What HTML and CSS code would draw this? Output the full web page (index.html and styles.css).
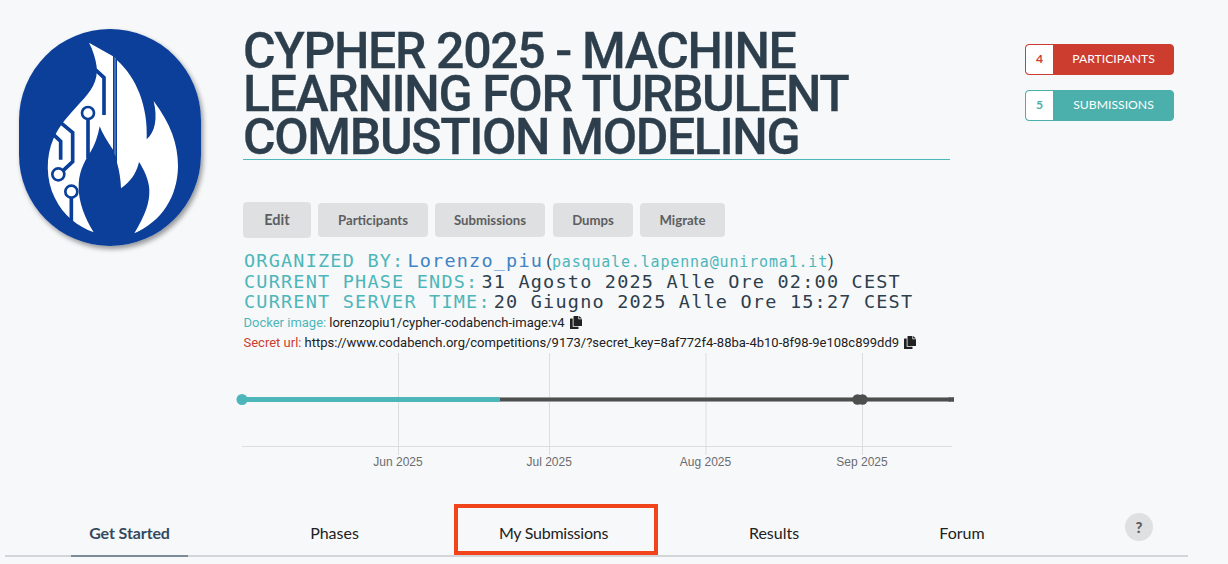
FILE: index.html
```html
<!DOCTYPE html>
<html lang="en">
<head>
<meta charset="utf-8">
<title>CYPHER 2025</title>
<link rel="stylesheet" href="styles.css">
</head>
<body>
<header class="hero">
  <svg class="logo" viewBox="57 57 546 651">
    <rect x="57" y="57" width="546" height="651" fill="#0b3f9a"/>
    <path fill="#fff" d="M267 98L339 139V419C322 394 307 370 299 349C293 380 285 405 270 428C249 461 235 490 236 535C237 580 254 622 281 667C235 650 190 618 165 565C137 509 137 440 160 387C179 344 206 317 239 280C275 241 294 214 290 170C287 146 279 121 267 98Z"/>
    <path fill="#fff" d="M351 151C409 202 445 290 440 388C466 366 473 323 461 273C512 342 534 401 534 469C533 560 485 635 403 670C437 611 449 579 448 539C447 510 431 477 417 456C410 489 391 516 363 535C362 507 358 482 351 458Z"/>
    <path fill="#7f9ccb" d="M343.500 141L346.500 145V440L343.500 430Z"/>
    <g fill="none" stroke="#0b3f9a" stroke-width="11">
      <path d="M286 179L312 203V315M182 338L218 368V455L190 481M160 373L182 394V449M264 327V445M214 563V640"/>
      <circle cx="264" cy="309" r="18" stroke-width="8" fill="#fff"/>
      <circle cx="175" cy="493" r="18" stroke-width="8" fill="#fff"/>
      <circle cx="214" cy="545" r="18" stroke-width="8" fill="#fff"/>
    </g>
  </svg>
  <main class="info">
    <h1 class="title">CYPHER 2025 - MACHINE<br>LEARNING FOR TURBULENT<br>COMBUSTION MODELING</h1>
    <div class="actions">
      <button class="btn btn-edit">Edit</button>
      <button class="btn btn-participants">Participants</button>
      <button class="btn btn-submissions">Submissions</button>
      <button class="btn btn-dumps">Dumps</button>
      <button class="btn btn-migrate">Migrate</button>
    </div>
    <div class="meta organizer"><span class="label">ORGANIZED BY:</span><a class="user">Lorenzo_piu</a><span class="paren open">(</span><a class="email">pasquale.lapenna@uniroma1.it</a><span class="paren">)</span></div>
    <div class="meta"><span class="label">CURRENT PHASE ENDS:</span><span class="value">31 Agosto 2025 Alle Ore 02:00 CEST</span></div>
    <div class="meta"><span class="label">CURRENT SERVER TIME:</span><span class="value">20 Giugno 2025 Alle Ore 15:27 CEST</span></div>
    <div class="detail docker"><span class="teal">Docker image:</span><span class="detail-text">lorenzopiu1/cypher-codabench-image:v4</span><svg class="copy" viewBox="0 0 12 13"><path d="M4 0H8.400V3.300H12V9.500Q12 10 11.500 10H4Q3.500 10 3.500 9.500V.5Q3.500 0 4 0ZM9.100 0L12 2.600H9.100Z"/><path d="M.5 2.500H2.700V10.800H8.500V12.500Q8.500 13 8 13H.5Q0 13 0 12.500V3Q0 2.500 .5 2.500Z"/></svg></div>
    <div class="detail secret"><span class="red">Secret url:</span><span class="detail-text">https://www.codabench.org/competitions/9173/?secret_key=8af772f4-88ba-4b10-8f98-9e108c899dd9</span><svg class="copy" viewBox="0 0 12 13"><path d="M4 0H8.400V3.300H12V9.500Q12 10 11.500 10H4Q3.500 10 3.500 9.500V.5Q3.500 0 4 0ZM9.100 0L12 2.600H9.100Z"/><path d="M.5 2.500H2.700V10.800H8.500V12.500Q8.500 13 8 13H.5Q0 13 0 12.500V3Q0 2.500 .5 2.500Z"/></svg></div>
    <svg class="timeline" viewBox="230 353 730 120">
      <g fill="#dcdddf">
        <rect x="398" y="353" width="1" height="102"/>
        <rect x="549" y="353" width="1" height="102"/>
        <rect x="705.500" y="353" width="1" height="102"/>
        <rect x="862" y="353" width="1" height="102"/>
        <rect x="242" y="446" width="710" height="1"/>
      </g>
      <rect x="500" y="397" width="454" height="5" fill="#9a9c9b"/>
      <rect x="500" y="398" width="454" height="3" fill="#4d4f4e"/>
      <rect x="242" y="397" width="258" height="5" fill="#4db6b9"/>
      <circle cx="242" cy="399.500" r="5.500" fill="#4db6b9"/>
      <g fill="#4d4f4e">
        <circle cx="857.500" cy="399.500" r="5.200"/>
        <circle cx="862.500" cy="399.500" r="5.200"/>
        <circle cx="950" cy="399.500" r="2.300"/>
        <rect x="952" y="397.500" width="2" height="4"/>
      </g>
      <g class="months">
        <text x="398" y="466">Jun 2025</text>
        <text x="549.200" y="466">Jul 2025</text>
        <text x="705.500" y="466">Aug 2025</text>
        <text x="862" y="466">Sep 2025</text>
      </g>
    </svg>
  </main>
  <aside class="stats">
    <div class="stat stat-red"><span class="count">4</span><span class="stat-name">PARTICIPANTS</span></div>
    <div class="stat stat-teal"><span class="count">5</span><span class="stat-name">SUBMISSIONS</span></div>
  </aside>
</header>
<nav class="tabs">
  <a class="tab tab-start"><span>Get Started</span></a>
  <a class="tab tab-phases">Phases</a>
  <a class="tab tab-mine">My Submissions</a>
  <a class="tab tab-results">Results</a>
  <a class="tab tab-forum">Forum</a>
  <span class="help">?</span>
</nav>
</body>
</html>
```
FILE: styles.css
```css
* { box-sizing: border-box; }
body {
  margin: 0;
  height: 564px;
  overflow: hidden;
  background: #f7f8fa;
  font-family: Lato, sans-serif;
  color: #212121;
}
.hero { display: flex; height: 504px; padding-left: 19px; }
.logo {
  flex: none;
  width: 182px;
  height: 217px;
  margin-top: 29px;
  border-radius: 91px;
  box-shadow: 2px 3px 5px rgba(0, 0, 0, .4);
}
.info { flex: none; width: 730px; margin-left: 42px; padding-top: 30px; white-space: nowrap; }
.title {
  width: 707px;
  height: 130px;
  margin: 0;
  border-bottom: 1px solid #4db6b9;
  font: 500 50px/43px Roboto, sans-serif;
  letter-spacing: -1.370px;
  color: #2d3e4c;
  -webkit-text-stroke: .3px #2d3e4c;
}
.actions { display: flex; align-items: center; height: 36px; margin-top: 42px; }
.btn {
  height: 34px;
  margin: 0;
  padding: 0;
  border: 0;
  border-radius: 4px;
  background: #dfe0e2;
  color: #5d5e5f;
  font: 700 13.200px/34px Lato, sans-serif;
}
.btn-edit { width: 68px; height: 36px; font-size: 14.500px; }
.btn-participants { width: 110px; margin-left: 7px; }
.btn-submissions { width: 110px; margin-left: 7px; }
.btn-dumps { width: 80px; margin-left: 8px; }
.btn-migrate { width: 85px; margin-left: 7px; }
.meta {
  display: flex;
  height: 20px;
  padding-left: 1px;
  font: 18.500px/20px "DejaVu Sans Mono", monospace;
  letter-spacing: 1.200px;
  color: #2d3e4c;
}
.organizer { height: 21px; margin-top: 13px; }
.label { margin-right: 3px; color: #4db6b9; }
.user { color: #4183c4; }
.email { font-size: 15px; line-height: 22px; letter-spacing: .830px; color: #4db6b9; }
.paren { font: 16px/21px Roboto, sans-serif; letter-spacing: .35px; }
.open { margin-left: 3px; }
.detail { display: flex; height: 20px; padding: 1px 0 0 .5px; font: 13px/20px Roboto, sans-serif; color: #212121; }
.detail-text { margin-left: 3px; }
.teal { color: #4db6b9; }
.red { color: #cc3d30; }
.copy { width: 12px; height: 13px; margin: 3px 0 0 5px; fill: #212121; }
.timeline { display: block; width: 730px; height: 120px; margin: 1px 0 0 -13px; }
.months { font: 12px "Liberation Sans", sans-serif; fill: #6b6c6e; text-anchor: middle; }
.stats { margin-left: 52px; padding-top: 44px; }
.stat {
  display: flex;
  width: 149px;
  height: 31px;
  margin-bottom: 15px;
  border: 1px solid;
  border-radius: 4px;
  overflow: hidden;
  font-size: 12.200px;
  line-height: 27px;
  text-align: center;
}
.stat-red { border-color: #cc3d30; background: #cc3d30; color: #cc3d30; }
.stat-teal { border-color: #4bb0ac; background: #4bb0ac; color: #4bb0ac; }
.count { width: 27px; background: #fff; font-weight: 700; border-radius: 3px 0 0 3px; }
.stat-name { flex: 1; padding-left: 1px; color: #fff; }
.tabs {
  display: flex;
  width: 1183px;
  height: 53px;
  margin-left: 5px;
  border-bottom: 2px solid #d4d5d8;
  font-size: 16px;
  text-align: center;
}
.tab { height: 51px; line-height: 57px; white-space: nowrap; }
.tab-start {
  width: 117px;
  height: 53px;
  margin-left: 66px;
  border-bottom: 2px solid #7d8b99;
  font-weight: 700;
  color: #34495e;
}
.tab-start span { letter-spacing: -.1px; }
.tab-phases { width: 117px; margin-left: 88px; }
.tab-mine { width: 204px; margin-left: 61px; border: 4px solid #f2441b; line-height: 49px; letter-spacing: -.25px; padding-right: 5px; }
.tab-results { width: 100px; margin-left: 66px; }
.tab-forum { width: 100px; margin-left: 88px; }
.help {
  width: 28px;
  height: 28px;
  margin: 9px 0 0 113px;
  border-radius: 50%;
  background: #dfe0e2;
  color: #5d5e5f;
  font: 900 15px/29px Lato, sans-serif;
}
```
